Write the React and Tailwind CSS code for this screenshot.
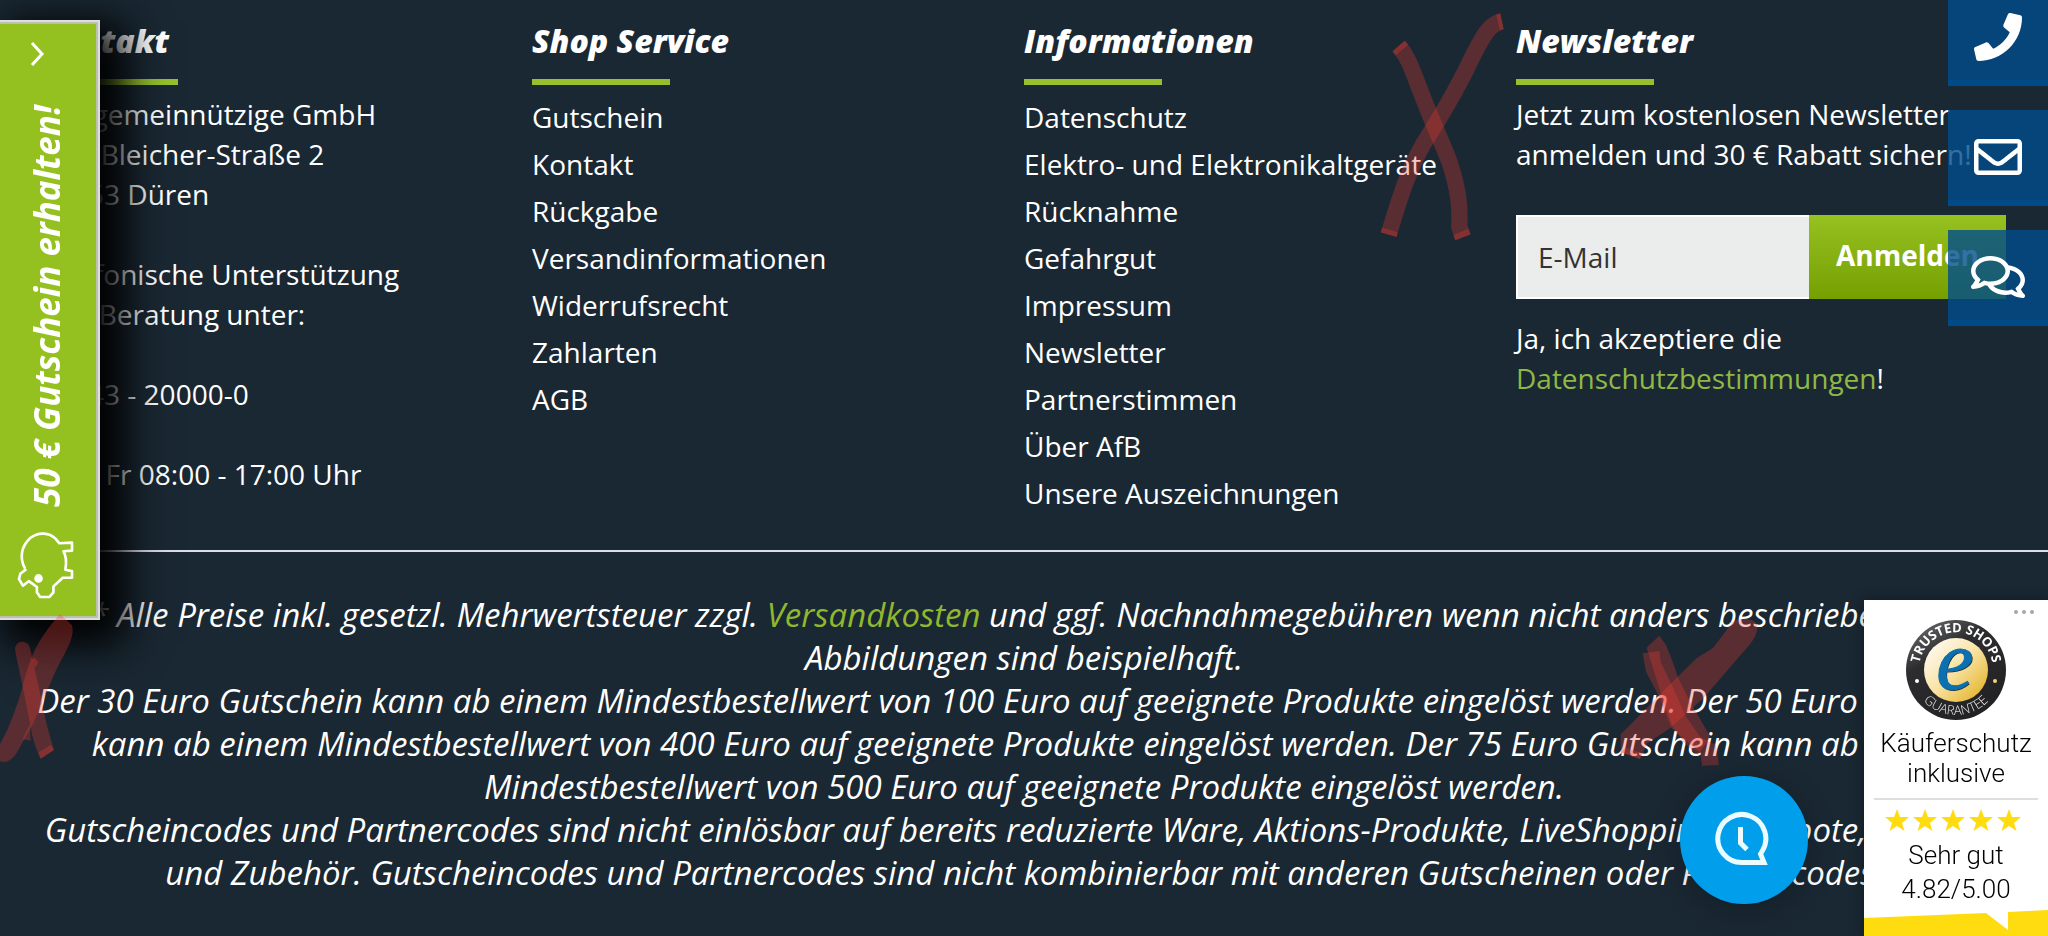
import { useState } from 'react';
import { FaPhone, FaRegEnvelope, FaRegComments } from 'react-icons/fa';

const shopLinks = ['Gutschein', 'Kontakt', 'Rückgabe', 'Versandinformationen', 'Widerrufsrecht', 'Zahlarten', 'AGB'];
const infoLinks = [
  'Datenschutz',
  'Elektro- und Elektronikaltgeräte',
  'Rücknahme',
  'Gefahrgut',
  'Impressum',
  'Newsletter',
  'Partnerstimmen',
  'Über AfB',
  'Unsere Auszeichnungen'
];

function Column({ title, children }) {
  return (
    <section>
      <h2 className="text-[32px] leading-[42px] font-extrabold italic">{title}</h2>
      <div className="mt-[17px] mb-2 h-[6px] w-[28%] bg-[#96c02e]" />
      {children}
    </section>
  );
}

function LinkList({ links }) {
  return (
    <ul className="pt-px">
      {links.map((link) => (
        <li key={link}><a href="#" className="block leading-[47px] hover:underline">{link}</a></li>
      ))}
    </ul>
  );
}

function Newsletter() {
  const [email, setEmail] = useState('');

  return (
    <form onSubmit={(e) => e.preventDefault()}>
      <p className="pt-px leading-[40px]">Jetzt zum kostenlosen Newsletter anmelden und 30 € Rabatt sichern!</p>
      <div className="mt-[41px] mb-[19px] mr-[2px] flex h-[84px]">
        <input
          type="email"
          aria-label="E-Mail"
          placeholder="E-Mail"
          value={email}
          onChange={(e) => setEmail(e.target.value)}
          className="min-w-0 flex-1 border-2 border-r-0 border-white bg-[#ebecec] px-5 text-[#333] placeholder:text-[#333] outline-none"
        />
        <button type="submit" className="w-[197px] shrink-0 bg-linear-to-b from-[#96c11f] to-[#76a000] pb-1 font-bold">Anmelden</button>
      </div>
      <p className="leading-[40px]">
        Ja, ich akzeptiere die <br />
        <a href="#" className="text-[#8fb844]">Datenschutzbestimmungen</a>!
      </p>
    </form>
  );
}

function VoucherTab() {
  return (
    <button type="button" className="fixed top-5 left-0 flex h-[600px] w-[100px] flex-col items-center justify-between border-y-2 border-r-2 border-[#dedede] bg-[#94c11f] pt-[18px] pb-[18px] shadow-[14px_14px_40px_12px_#000]">
      <span className="absolute inset-0 border-y-2 border-r-2 border-[#bcc0b0]" />
      <svg viewBox="0 0 20 28" className="mr-6 h-7 w-5 fill-none stroke-white" strokeWidth="3">
        <path d="M5 3 L15 14 L5 25" />
      </svg>
      <span className="mt-3 mr-1 rotate-180 text-[35px] leading-[48px] font-bold italic whitespace-nowrap [writing-mode:vertical-rl]">50 € Gutschein erhalten!</span>
      <svg viewBox="52 632 172 206" className="mr-2 h-[69px] w-[57px] fill-none stroke-white" strokeWidth="8" strokeLinejoin="round">
        <path d="M76 744 C58 710 66 676 92 652 C118 632 150 636 168 654 L180 668 L218 666 L218 690 L192 692 C202 708 202 724 198 748 L218 752 L218 772 L190 772 L162 798 L162 816 L150 830 L122 830 L112 816 L112 800 L88 782 L70 796 L58 776 L62 760 L80 746" />
        <circle cx="117" cy="774" r="9" className="fill-white" />
      </svg>
    </button>
  );
}

function ContactBar() {
  const item = 'flex h-24 items-center justify-center border-b-[6px] border-[#004c8c]/80 bg-[#004c8c]/80 pt-1';
  return (
    <nav className="fixed -top-[10px] right-0 flex w-[100px] flex-col gap-6">
      <a href="#" aria-label="Telefon" className={item}><FaPhone className="size-12" /></a>
      <a href="#" aria-label="E-Mail schreiben" className={item}><FaRegEnvelope className="size-12" /></a>
      <a href="#" aria-label="Chat" className={item}><FaRegComments className="size-[54px]" /></a>
    </nav>
  );
}

function Seal() {
  return (
    <svg viewBox="0 0 100 100" className="size-[100px] shrink-0">
      <defs>
        <linearGradient id="ring" x1="0" y1="0" x2="0.6" y2="1">
          <stop offset="0" stopColor="#77777b" />
          <stop offset="0.4" stopColor="#2d2d2f" />
          <stop offset="1" stopColor="#222224" />
        </linearGradient>
        <linearGradient id="gold" x1="0.1" y1="0.1" x2="0.9" y2="0.9">
          <stop offset="0" stopColor="#fffaf2" />
          <stop offset="0.5" stopColor="#f9e2a2" />
          <stop offset="1" stopColor="#e3b62f" />
        </linearGradient>
        <path id="arcTop" d="M13.300 54 A37 37 0 1 1 86.700 54" />
        <path id="arcBottom" d="M5 50 A45 45 0 0 0 95 50" />
      </defs>
      <circle cx="50" cy="50" r="50" fill="url(#ring)" />
      <circle cx="50" cy="50" r="32" fill="url(#gold)" />
      <text fontSize="13" fontWeight="700" fill="#fff" textAnchor="middle" className="font-['Open_Sans',sans-serif]">
        <textPath href="#arcTop" startOffset="50%">TRUSTED SHOPS</textPath>
      </text>
      <text fontSize="13" fill="#eee" textAnchor="middle" className="font-['Open_Sans',sans-serif]">
        <textPath href="#arcBottom" startOffset="50%">GUARANTEE</textPath>
      </text>
      <circle cx="11" cy="61" r="2" fill="#fff" />
      <circle cx="89" cy="61" r="2" fill="#f2d66c" />
      <text x="50" y="70" fontSize="84" fontStyle="italic" fill="#222" textAnchor="middle" className="font-['Liberation_Serif',serif]">e</text>
      <text x="49" y="69" fontSize="84" fontStyle="italic" fill="#0c70b0" stroke="#0c70b0" textAnchor="middle" className="font-['Liberation_Serif',serif]">e</text>
    </svg>
  );
}

function TrustBadge() {
  return (
    <aside className="fixed right-0 bottom-0 flex h-[336px] w-[184px] flex-col items-center bg-white font-['Roboto',sans-serif] text-[26px] font-light text-black shadow-[0_0_12px_rgba(0,0,0,0.4)]">
      <button type="button" aria-label="Menü" className="flex h-5 w-full shrink-0 items-end justify-end gap-1 pr-[14px] pb-[6px]">
        <i className="size-1 rounded-full bg-[#a6a6a6]" />
        <i className="size-1 rounded-full bg-[#a6a6a6]" />
        <i className="size-1 rounded-full bg-[#a6a6a6]" />
      </button>
      <Seal />
      <p className="pt-2 text-center leading-[30px]">Käuferschutz inklusive</p>
      <hr className="mt-[10px] w-[164px] border-t-2 border-[#dedede]" />
      <svg viewBox="0 0 140 26" className="mt-2 mr-[6px] h-[26px] w-[140px] shrink-0 fill-[#ffdc0f]">
        {[14, 42, 70, 98, 126].map((x) => (
          <path key={x} transform={`translate(${x} 13)`} d="M0 -12 L3 -4 L12 -4 L5 2 L7.500 10 L0 5 L-7.500 10 L-5 2 L-12 -4 L-3 -4 Z" />
        ))}
      </svg>
      <p className="mt-1 text-center leading-[34px]">Sehr gut<br />4.82/5.00</p>
      <svg viewBox="0 0 184 26" preserveAspectRatio="none" className="mt-auto h-[26px] w-full shrink-0 fill-[#ffdc0f]">
        <path d="M0 8 L122 3 L144 20 V2 L184 0 V26 H0 Z" />
      </svg>
    </aside>
  );
}

function ChatButton() {
  return (
    <button type="button" aria-label="Chat öffnen" className="fixed right-[240px] bottom-8 flex size-32 items-center justify-center rounded-full bg-[#009eeb] shadow-[0_6px_30px_rgba(0,0,0,0.25)]">
      <svg viewBox="0 0 54 54" className="mr-1 mb-1 size-[54px] fill-none stroke-[#eafcff]" strokeWidth="5">
        <path d="M27 51.500 A24 24 0 1 1 47 40.500 L45.500 43 L49 51.500 Z" />
        <path d="M25.500 16 V32 L32 38.500" />
      </svg>
    </button>
  );
}

function MarkerCrosses() {
  return (
    <div className="pointer-events-none">
      <svg viewBox="0 0 390 720" className="absolute top-0 left-[1370px] h-[240px] w-[130px] overflow-visible fill-none stroke-[#eb3c32]/30" strokeWidth="49">
        <path d="M86 138 C114 170 125 205 150 270 C200 400 210 410 240 490 C265 570 270 610 268 680 L279 712" />
        <path d="M396 64 C360 70 340 105 310 165 C270 250 230 320 180 400 C120 490 90 590 56 704" />
        <path d="M86 138 L96 150 M272 696 L279 712 M396 64 L384 67 M60 690 L56 704" />
      </svg>
      <svg viewBox="0 0 480 510" className="absolute top-[605px] left-[1610px] h-[170px] w-[160px] fill-[#eb3c32]/30">
        <path d="M370 48 C400 38 435 40 442 62 C442 90 430 108 400 140 L280 280 L180 370 L112 415 L90 462 L32 442 L32 388 L70 350 L160 258 L260 160 L310 128 Z" />
        <path d="M148 92 L168 120 L188 170 L205 220 L240 290 L295 385 L300 400 L262 450 L220 410 L190 370 L165 300 L145 240 L110 128 Z" />
        <path d="M98 145 L148 138 L152 170 L190 250 L225 330 L270 395 L318 420 L327 480 L276 482 L272 445 L215 395 L185 370 L150 280 L108 200 Z" />
        <path d="M46 428 L95 444 L90 462 L32 442 Z" />
      </svg>
      <svg viewBox="0 0 480 540" className="absolute top-[600px] left-0 z-10 h-[180px] w-[160px] fill-[#eb3c32]/30">
        <path d="M180 42 L216 76 C222 100 215 120 195 160 C160 220 140 280 100 370 L55 450 C40 480 20 490 0 484 L0 432 C30 380 50 320 68 260 C90 170 110 130 155 72 Z" />
        <path d="M45 150 C45 118 85 118 90 145 L125 300 C135 360 150 410 162 450 L122 476 C100 430 95 400 90 370 L68 260 Z" />
        <path d="M90 372 L92 422 L68 418 L76 400 Z" />
        <path d="M102 172 L115 186 L105 205 L96 180 Z" />
        <path d="M115 458 L152 434 L162 450 L122 476 Z" />
      </svg>
    </div>
  );
}

export default function App() {
  return (
    <div className="relative min-h-screen overflow-hidden bg-[#1a2833] font-['Open_Sans',sans-serif] text-[28px] text-white">
      <footer>
        <div className="grid grid-cols-4 px-10 pt-5 pb-[33px]">
          <Column title="Kontakt">
            <address className="pt-px leading-[40px] not-italic">
              AfB gemeinnützige GmbH<br />
              Carl-Bleicher-Straße 2<br />
              52353 Düren<br />
              <br />
              Telefonische Unterstützung<br />
              und Beratung unter:<br />
              <br />
              02443 - 20000-0<br />
              <br />
              Mo - Fr 08:00 - 17:00 Uhr
            </address>
          </Column>
          <Column title="Shop Service"><LinkList links={shopLinks} /></Column>
          <Column title="Informationen"><LinkList links={infoLinks} /></Column>
          <Column title="Newsletter"><Newsletter /></Column>
        </div>

        <div className="border-t-2 border-[#dcdcee] px-6 pt-[41px] text-center text-[33px] leading-[43px] italic">
          <p>
            * Alle Preise inkl. gesetzl. Mehrwertsteuer zzgl. <a href="#" className="text-[#8fb82e]">Versandkosten</a> und ggf. Nachnahmegebühren wenn nicht anders beschrieben. Die Abbildungen sind beispielhaft.
          </p>
          <p>
            Der 30 Euro Gutschein kann ab einem Mindestbestellwert von 100 Euro auf geeignete Produkte eingelöst werden. Der 50 Euro Gutschein kann ab einem Mindestbestellwert von 400 Euro auf geeignete Produkte eingelöst werden. Der 75 Euro Gutschein kann ab einem Mindestbestellwert von 500 Euro auf geeignete Produkte eingelöst werden.
          </p>
          <p>
            Gutscheincodes und Partnercodes sind nicht einlösbar auf bereits reduzierte Ware, Aktions-Produkte, LiveShopping-Angebote, Software und Zubehör. Gutscheincodes und Partnercodes sind nicht kombinierbar mit anderen Gutscheinen oder Partnercodes.
          </p>
        </div>
      </footer>

      <VoucherTab />
      <ContactBar />
      <MarkerCrosses />
      <TrustBadge />
      <ChatButton />
    </div>
  );
}
